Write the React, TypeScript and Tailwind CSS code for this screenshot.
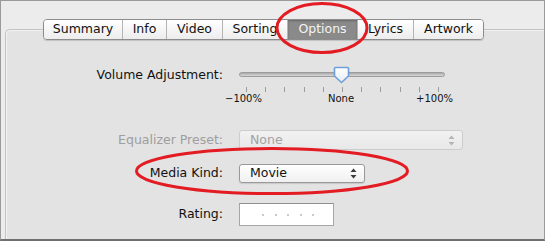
import React from "react";

const tabs = [
  { label: "Summary", w: 78 },
  { label: "Info", w: 44 },
  { label: "Video", w: 56 },
  { label: "Sorting", w: 65 },
  { label: "Options", w: 70, active: true },
  { label: "Lyrics", w: 56 },
  { label: "Artwork", w: 70 },
];

function Arrows({ color }: { color: string }) {
  return (
    <svg width="7" height="11" viewBox="0 0 7 11">
      <path d="M3.5 0.5 L6.5 4 L0.5 4 Z" fill={color} />
      <path d="M3.5 10.5 L6.5 7 L0.5 7 Z" fill={color} />
    </svg>
  );
}

export default function App() {
  return (
    <div
      className="relative w-[545px] h-[241px] overflow-hidden bg-[#ececec] border-l border-t border-r border-[#9a9a9a] border-b-2 border-b-[#6f6f6f] text-[12.5px] text-[#111]"
      style={{ fontFamily: '"DejaVu Sans", "Liberation Sans", sans-serif' }}
    >
      <div className="ml-[4px] mt-[28px] h-[260px] border-l border-t border-[#c2c2c2] rounded-tl-[5px] bg-[#e3e3e3] shadow-[inset_1px_1px_0_#f2f2f2]">
        {/* Tabs */}
        <div className="-mt-[11px] ml-[37px] flex w-fit h-[21px] rounded-[4px] border border-[#8c8c8c] overflow-hidden shadow-[0_1px_1px_rgba(0,0,0,0.15)]">
          {tabs.map((t, i) => (
            <div
              key={t.label}
              style={{ width: t.w }}
              className={
                "flex items-center justify-center leading-none " +
                (i > 0 ? "border-l border-[#b4b4b4] " : "") +
                (t.active
                  ? "bg-[#8a8a8a] text-[#f4f4f4] shadow-[inset_0_1px_2px_rgba(0,0,0,0.25)]"
                  : "bg-gradient-to-b from-white to-[#ededed]")
              }
            >
              {t.label}
            </div>
          ))}
        </div>

        {/* Volume Adjustment */}
        <div className="mt-[25px] flex items-center h-[18px]">
          <div className="w-[217px] text-right leading-none pt-[2px] whitespace-nowrap">Volume Adjustment:</div>
          <div className="ml-[16px] relative w-[206px] h-[18px] flex items-center">
            <div className="w-full h-[5px] rounded-full bg-gradient-to-b from-[#a9a9a9] to-[#d9d9d9] border border-[#9c9c9c]" />
            <svg
              className="absolute left-[94px] top-[1px]"
              width="17"
              height="18"
              viewBox="0 0 17 18"
            >
              <defs>
                <linearGradient id="th" x1="0" y1="0" x2="0" y2="1">
                  <stop offset="0" stopColor="#ffffff" />
                  <stop offset="1" stopColor="#e6ecf4" />
                </linearGradient>
              </defs>
              <path
                d="M2.5 1.5 H14.5 Q15.5 1.5 15.5 2.5 V10 L8.5 16.5 L1.5 10 V2.5 Q1.5 1.5 2.5 1.5 Z"
                fill="url(#th)"
                stroke="#6f9fd8"
                strokeWidth="1.6"
              />
            </svg>
          </div>
        </div>
        <div className="mt-[4px] ml-[240px] w-[193px] h-[5px] flex justify-between">
          {Array.from({ length: 11 }).map((_, i) => (
            <div key={i} className="w-px h-full bg-[#9c9c9c]" />
          ))}
        </div>
        <div className="ml-[219px] w-[228px] h-[13px] flex justify-between text-[10px] leading-[13px]">
          <span>−100%</span>
          <span className="pl-[4px]">None</span>
          <span>+100%</span>
        </div>

        {/* Equalizer Preset */}
        <div className="mt-[25px] flex items-center h-[20px]">
          <div className="w-[217px] text-right text-[#9e9e9e] leading-none whitespace-nowrap">Equalizer Preset:</div>
          <div className="ml-[16px] w-[224px] h-[20px] rounded-[3px] border border-[#cdcdcd] bg-gradient-to-b from-[#f1f1f1] to-[#e8e8e8] flex items-center justify-between pl-[10px] pr-[7px] text-[#a2a2a2]">
            <span className="leading-none">None</span>
            <Arrows color="#b4b4b4" />
          </div>
        </div>

        {/* Media Kind */}
        <div className="mt-[14px] flex items-center h-[19px]">
          <div className="w-[217px] text-right leading-none">Media Kind:</div>
          <div className="ml-[16px] w-[126px] h-[19px] rounded-[3px] border border-[#9a9a9a] bg-gradient-to-b from-white to-[#f0f0f0] shadow-[0_1px_1px_rgba(0,0,0,0.12)] flex items-center justify-between pl-[10px] pr-[7px]">
            <span className="leading-none">Movie</span>
            <Arrows color="#3a3a3a" />
          </div>
        </div>

        {/* Rating */}
        <div className="mt-[20px] flex items-center h-[23px]">
          <div className="w-[217px] text-right leading-none">Rating:</div>
          <div className="ml-[16px] w-[95px] h-[23px] border border-[#a6a6a6] border-t-[#8f8f8f] bg-white flex items-center pl-[22px] gap-[10.5px]">
            {Array.from({ length: 5 }).map((_, i) => (
              <div key={i} className="w-[2px] h-[2px] rounded-full bg-[#b8b8b8]" />
            ))}
          </div>
        </div>
      </div>

      {/* Red annotation ellipses */}
      <svg className="absolute left-0 top-0 pointer-events-none" width="545" height="241">
        <ellipse cx="321" cy="27" rx="45" ry="24.5" fill="none" stroke="#e31b23" strokeWidth="3" />
        <ellipse cx="271" cy="170" rx="135.5" ry="22.5" fill="none" stroke="#e31b23" strokeWidth="3" />
      </svg>
    </div>
  );
}
